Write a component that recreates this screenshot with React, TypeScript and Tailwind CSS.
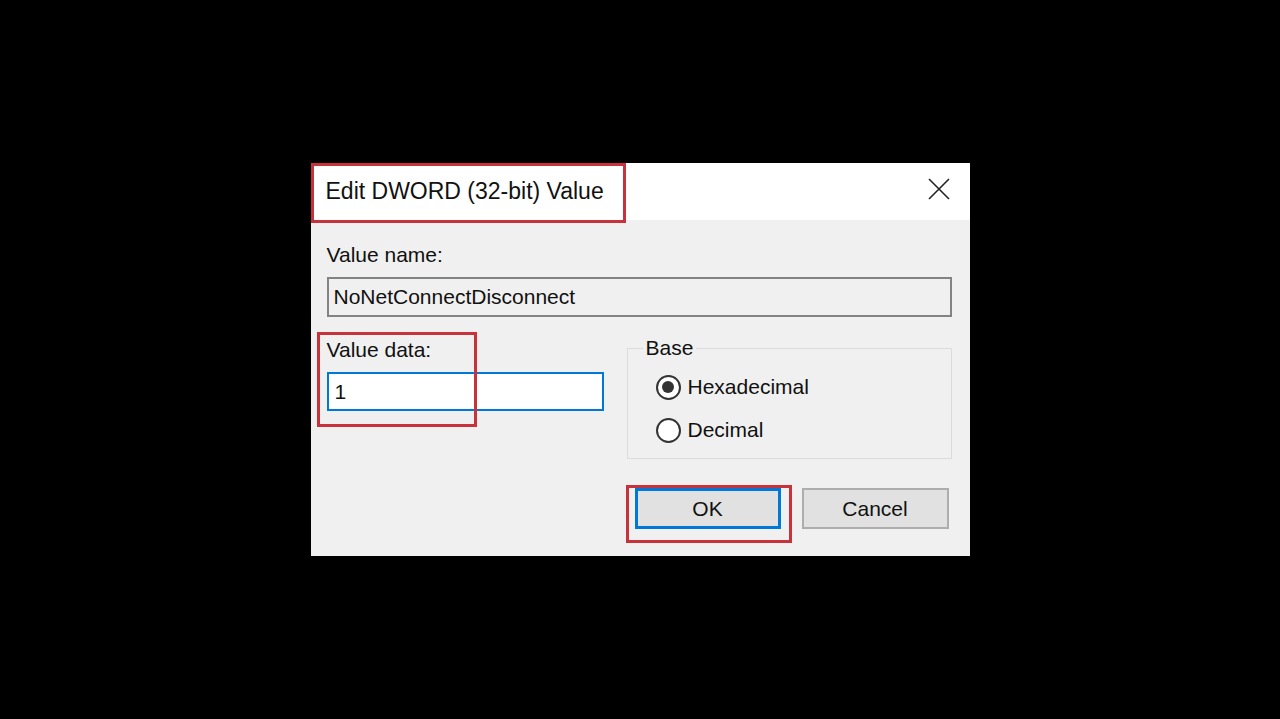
export default function App() {
  return (
    <div className="flex h-screen w-full items-center justify-center bg-black" style={{ fontFamily: '"Liberation Sans", Arial, sans-serif' }}>
      <div className="relative flex h-[393px] w-[659px] flex-col bg-[#f0f0f0] text-[#111]">
        {/* title bar */}
        <div className="flex h-[57px] items-center justify-between bg-white pl-[15px] pr-[20px]">
          <span className="text-[23px] leading-none">Edit DWORD (32-bit) Value</span>
          <svg width="22" height="22" viewBox="0 0 22 22" className="-mt-[5px] text-[#222]">
            <path d="M1 1 L21 21 M21 1 L1 21" stroke="currentColor" strokeWidth="1.6" fill="none" />
          </svg>
        </div>

        <div className="flex flex-col pl-[16px] pr-[18px] pt-[23px] text-[21px]">
          <div className="h-6 leading-6">Value name:</div>
          <div className="mt-[10px] flex h-[40px] items-center border-2 border-[#838383] bg-[#f0f0f0] pl-[5px]">
            NoNetConnectDisconnect
          </div>

          <div className="mt-[19px] flex gap-[23px]">
            <div className="flex w-[277px] flex-col">
              <div className="mt-[2px] h-6 leading-6">Value data:</div>
              <div className="mt-[10px] flex h-[39px] items-center border-2 border-[#0078d7] bg-white pl-[6px]">1</div>
            </div>
            <fieldset className="h-[123px] w-[325px] border border-[#dcdcdc] px-0 pb-[15px]">
              <legend className="ml-[15px] px-[3px] leading-6">Base</legend>
              <div className="ml-[28px] mt-[14px] flex flex-col gap-[17px]">
                <label className="flex h-[26px] items-center gap-[7px]">
                  <span className="flex h-[25px] w-[25px] items-center justify-center rounded-full border-2 border-[#333] bg-white">
                    <span className="h-[12px] w-[12px] rounded-full bg-[#333]" />
                  </span>
                  Hexadecimal
                </label>
                <label className="flex h-[26px] items-center gap-[7px]">
                  <span className="h-[25px] w-[25px] rounded-full border-2 border-[#333] bg-white" />
                  Decimal
                </label>
              </div>
            </fieldset>
          </div>

          <div className="mt-[29px] flex justify-end gap-[21px] pr-[3px]">
            <button className="flex h-[41px] w-[146px] items-center justify-center border-[3px] border-[#0078d7] bg-[#e1e1e1]">OK</button>
            <button className="flex h-[41px] w-[147px] items-center justify-center border-2 border-[#adadad] bg-[#e1e1e1]">Cancel</button>
          </div>
        </div>

        {/* red annotation boxes */}
        <div className="pointer-events-none absolute left-0 top-0 h-[60px] w-[315px] border-[3px] border-[#c8323a]" />
        <div className="pointer-events-none absolute left-[6px] top-[169px] h-[95px] w-[160px] border-[3px] border-[#c8323a]" />
        <div className="pointer-events-none absolute left-[315px] top-[322px] h-[58px] w-[166px] border-[3px] border-[#c8323a]" />
      </div>
    </div>
  );
}
